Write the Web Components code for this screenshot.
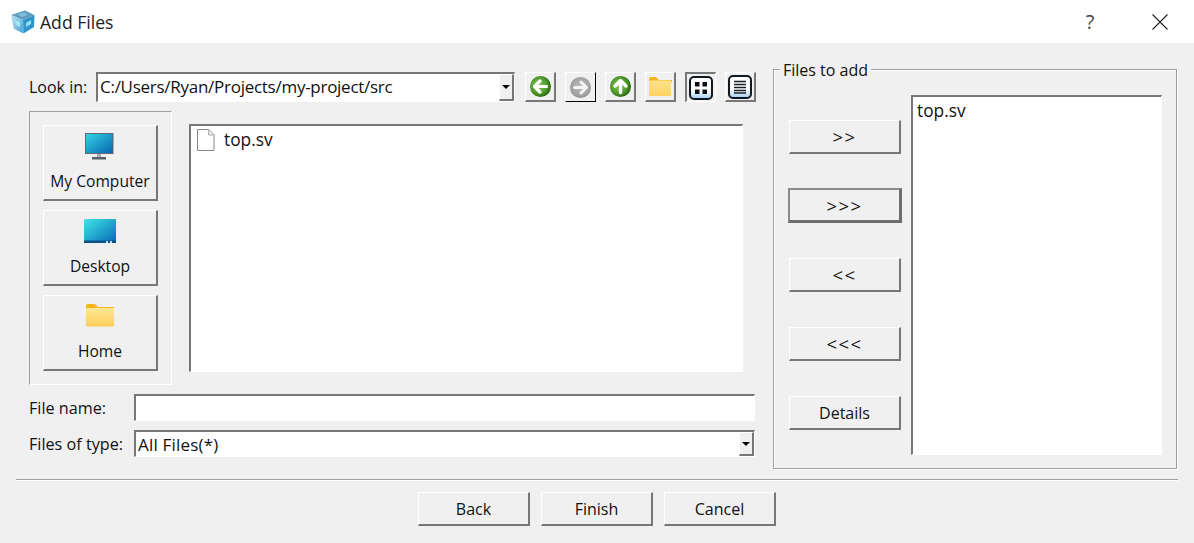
<!DOCTYPE html>
<html>
<head>
<meta charset="utf-8">
<title>Add Files</title>
<style>
    html, body { margin: 0; padding: 0; height: 100%; }
    body {
        background: #f0f0f0;
        color: #111;
        font: 16px "Open Sans", "Noto Sans", "Liberation Sans", sans-serif;
        overflow: hidden;
    }
</style>
</head>
<body>
<add-files-dialog></add-files-dialog>

<script>
// Iconos compartidos
const ICONOS = {
    back: `<svg width="27" height="27" viewBox="0 0 27 27"><defs><radialGradient id="v1" cx=".42" cy=".45" r=".6"><stop offset="0" stop-color="#8ccb5e"/><stop offset=".65" stop-color="#4f9a2c"/><stop offset="1" stop-color="#1f5f10"/></radialGradient></defs><circle cx="13.500" cy="13.500" r="10.500" fill="url(#v1)"/><path d="M13 8l-5.500 5.500L13 19M8 13.500h11.500" fill="none" stroke="#fff" stroke-width="3.200" stroke-linecap="round" stroke-linejoin="round"/></svg>`,
    forward: `<svg width="27" height="27" viewBox="0 0 27 27"><defs><radialGradient id="v3" cx=".5" cy=".45" r=".6"><stop offset="0" stop-color="#bdbdbd"/><stop offset=".7" stop-color="#a4a4a4"/><stop offset="1" stop-color="#858585"/></radialGradient></defs><circle cx="13.500" cy="13.500" r="10.500" fill="url(#v3)"/><path d="M14 8l5.500 5.500L14 19M19 13.500H7.500" fill="none" stroke="#f4f4f4" stroke-width="3" stroke-linecap="round" stroke-linejoin="round"/></svg>`,
    up: `<svg width="27" height="27" viewBox="0 0 27 27"><defs><radialGradient id="v2" cx=".42" cy=".45" r=".6"><stop offset="0" stop-color="#8ccb5e"/><stop offset=".65" stop-color="#4f9a2c"/><stop offset="1" stop-color="#1f5f10"/></radialGradient></defs><circle cx="13.500" cy="13.500" r="10.500" fill="url(#v2)"/><path d="M8 13l5.500-5.500L19 13M13.500 8v11.500" fill="none" stroke="#fff" stroke-width="3.400" stroke-linecap="round" stroke-linejoin="round"/></svg>`,
    folderSmall: `<svg width="23" height="19" viewBox="0 0 23 19"><defs><linearGradient id="c1" x1="0" y1="0" x2="0" y2="1"><stop offset="0" stop-color="#ffe28a"/><stop offset="1" stop-color="#fdd262"/></linearGradient></defs><path d="M0 1.500Q0 0 1.500 0H7l3 3h13v2H0z" fill="#f7b51f"/><rect y="3.500" width="22" height="15.500" rx="1" fill="url(#c1)"/></svg>`,
    grid: `<svg width="24" height="24" viewBox="0 0 24 24"><defs><linearGradient id="g1" x1="0" y1="0" x2="0" y2="1"><stop offset=".6" stop-color="#fff"/><stop offset="1" stop-color="#9fcdf3"/></linearGradient></defs><rect x="1" y="1" width="22" height="22" rx="4" fill="url(#g1)" stroke="#111820" stroke-width="2"/><path d="M6 6h4.500v4.500H6zM13.500 6H18v4.500h-4.500zM6 13.500h4.500V18H6zM13.500 13.500H18V18h-4.500z" fill="#0c1016"/></svg>`,
    list: `<svg width="24" height="24" viewBox="0 0 24 24"><defs><linearGradient id="g2" x1="0" y1="0" x2="0" y2="1"><stop offset=".6" stop-color="#fff"/><stop offset="1" stop-color="#9fcdf3"/></linearGradient></defs><rect x="1" y="1" width="22" height="22" rx="4" fill="url(#g2)" stroke="#111820" stroke-width="2"/><path d="M6 6.500h12M6 9.500h12M6 12.500h12M6 15.500h12M6 18h12" stroke="#1a1f26" stroke-width="1.600"/></svg>`,
    computer: `<svg width="30" height="27" viewBox="0 0 30 27"><defs><linearGradient id="m1" x1="0" y1="0" x2="1" y2="1"><stop offset="0" stop-color="#35d6e4"/><stop offset="1" stop-color="#0762b0"/></linearGradient></defs><rect x=".5" y=".5" width="27.500" height="20" fill="url(#m1)" stroke="#5c6873"/><rect x="12" y="21" width="4" height="3" fill="#a8aeb2"/><rect x="7" y="24" width="14" height="2.500" fill="#56606a"/></svg>`,
    desktop: `<svg width="33" height="26" viewBox="0 -1 33 26"><defs><linearGradient id="m2" x1="0" y1="0" x2="1" y2="1"><stop offset="0" stop-color="#3fe6e8"/><stop offset="1" stop-color="#0768b4"/></linearGradient></defs><rect width="32" height="24" rx="1" fill="url(#m2)"/><rect y="21.500" width="32" height="2.500" fill="#0a5288"/><rect x="22" y="22" width="2" height="2" fill="#b9dcee"/><rect x="26" y="22" width="2" height="2" fill="#b9dcee"/></svg>`,
    folder: `<svg width="29" height="24" viewBox="0 -1 29 24"><defs><linearGradient id="c2" x1="0" y1="0" x2="0" y2="1"><stop offset="0" stop-color="#ffe795"/><stop offset="1" stop-color="#fdcf5b"/></linearGradient></defs><path d="M0 1.500Q0 0 1.500 0H9l3 3h16v3H0z" fill="#f7b51f"/><rect y="4" width="28" height="18.500" rx="1" fill="url(#c2)"/></svg>`,
    doc: `<svg width="18" height="22" viewBox="0 0 18 22"><path d="M.5.500H12L17 5.500V21.500H.5z" fill="#fff" stroke="#8a8a8a"/><path d="M11.500.500V6H17" fill="#e6e6e6" stroke="#b0b0b0"/></svg>`,
    cube: `<svg width="26" height="26" viewBox="0 0 26 26"><defs><linearGradient id="q1" x1="0" y1="0" x2="1" y2="1"><stop offset="0" stop-color="#b5e2f2"/><stop offset="1" stop-color="#4aa3d6"/></linearGradient><filter id="bl"><feGaussianBlur stdDeviation=".55"/></filter></defs><g filter="url(#bl)"><path d="M1 6L15 1.500 24.500 6 13 11z" fill="#5f9cbd"/><path d="M1 6l12 5 .5 13.500L4 20z" fill="url(#q1)"/><path d="M13 11l11.500-5-.5 12-10.500 6.500z" fill="#2f94cc"/><path d="M5 11l5 2v5l-4-2zM16 14l5-3v4l-5 3z" fill="#a8ecf6" opacity=".85"/><path d="M7 5.500l7-2 4 2-6 2.500z" fill="#7fc0dc"/></g></svg>`
};

const BISEL = `
    background: #f0f0f0;
    box-sizing: border-box;
    border-style: solid;
    border-width: 1px 2px 2px 1px;
    border-color: #fff #777 #777 #fff;
`;

// Barra de titulo
class BarraTitulo extends HTMLElement {
    constructor() {
        super();
        this.attachShadow({ mode: 'open' });
        this.shadowRoot.innerHTML = `
            <style>
                :host {
                    display: flex;
                    align-items: center;
                    height: 43px;
                    background: #fff;
                    padding-left: 10px;
                    color: #222;
                }
                .logo { display: flex; margin-right: 4px; }
                .texto { flex: 1; font-size: 17.6px; }
                .ayuda { width: 22px; text-align: center; font-size: 20px; color: #444; margin-right: 51px; }
                .cerrar { display: flex; margin-right: 26px; }
            </style>
            <span class="logo">${ICONOS.cube}</span>
            <span class="texto"><slot></slot></span>
            <span class="ayuda">?</span>
            <span class="cerrar"><svg width="16" height="16" viewBox="0 0 16 16"><path d="M.5.500l15 15M15.500.500l-15 15" stroke="#222" stroke-width="1.100" fill="none"/></svg></span>
        `;
    }
}

// Combo con flecha
class CajaCombo extends HTMLElement {
    constructor() {
        super();
        this.attachShadow({ mode: 'open' });
        this.shadowRoot.innerHTML = `
            <style>
                :host {
                    display: flex;
                    box-sizing: border-box;
                    background: #fff;
                    border-style: solid;
                    border-width: 2px 1px 1px 2px;
                    border-color: #777 #fff #fff #777;
                    align-items: stretch;
                    font-size: 17px;
                }
                .valor { flex: 1; padding-left: 2px; line-height: 26px; white-space: nowrap; color: #111; }
                .flecha {
                    ${BISEL}
                    width: 15px;
                    display: flex;
                    align-items: center;
                    justify-content: center;
                }
                .flecha i {
                    border: 4px solid transparent;
                    border-top: 4px solid #000;
                    border-bottom: 0;
                    display: block;
                }
            </style>
            <span class="valor"><slot></slot></span>
            <span class="flecha"><i></i></span>
        `;
    }
}

// Boton de la barra de herramientas
class BotonHerramienta extends HTMLElement {
    constructor() {
        super();
        this.attachShadow({ mode: 'open' });
    }

    connectedCallback() {
        const icono = ICONOS[this.getAttribute('icono')] || '';
        const estado = this.getAttribute('estado');
        let bordes = 'border-color: #fff #777 #777 #fff;';
        if (estado === 'plano') bordes = 'border-width: 1px 1px 1px 1px; border-color: #fff #000 #000 #fff;';
        if (estado === 'activo') bordes = 'border-width: 2px 1px 1px 2px; border-color: #777 #fff #fff #777;';
        this.shadowRoot.innerHTML = `
            <style>
                :host {
                    ${BISEL}
                    ${bordes}
                    display: flex;
                    align-items: center;
                    justify-content: center;
                    width: 31px;
                    height: 30px;
                }
                svg { display: block; }
            </style>
            ${icono}
        `;
    }
}

// Boton normal de texto, opcionalmente con icono encima
class BotonNormal extends HTMLElement {
    constructor() {
        super();
        this.attachShadow({ mode: 'open' });
    }

    connectedCallback() {
        const icono = ICONOS[this.getAttribute('icono')];
        this.shadowRoot.innerHTML = `
            <style>
                :host {
                    ${BISEL}
                    display: flex;
                    flex-direction: column;
                    align-items: center;
                    justify-content: center;
                    width: 112px;
                    height: 34px;
                    color: #111;
                    white-space: nowrap;
                }
                :host([icono]) {
                    width: 115px;
                    height: 76px;
                    justify-content: flex-start;
                    font-size: 15.6px;
                }
                :host([por-defecto]) {
                    width: 114px;
                    height: 35px;
                    margin-top: -1px;
                    border-width: 2px 3px 3px 2px;
                    border-color: #6e6e6e;
                    border-top-color: #8a8a8a;
                    border-left-color: #8a8a8a;
                }
                :host([flechas]) { letter-spacing: 1.5px; font-size: 18.5px; }
                .icono { height: 35px; margin-top: 7px; margin-bottom: 2px; display: flex; align-items: flex-start; }
                svg { display: block; }
            </style>
            ${icono ? `<span class="icono">${icono}</span>` : ''}
            <slot></slot>
        `;
    }
}

// Lista blanca hundida
class ListaArchivos extends HTMLElement {
    constructor() {
        super();
        this.attachShadow({ mode: 'open' });
        this.shadowRoot.innerHTML = `
            <style>
                :host {
                    display: block;
                    box-sizing: border-box;
                    background: #fff;
                    border-style: solid;
                    border-width: 2px 1px 1px 2px;
                    border-color: #777 #fff #fff #777;
                    color: #111;
                    font-size: 17.300px;
                }
            </style>
            <slot></slot>
        `;
    }
}

// Fila con icono para el listado
class FilaArchivo extends HTMLElement {
    constructor() {
        super();
        this.attachShadow({ mode: 'open' });
        this.shadowRoot.innerHTML = `
            <style>
                :host { display: flex; align-items: center; gap: 9px; padding: 0 0 0 6px; height: 27px; }
                svg { display: block; }
            </style>
            ${ICONOS.doc}
            <slot></slot>
        `;
    }
}

// Panel izquierdo de accesos
class PanelLugares extends HTMLElement {
    constructor() {
        super();
        this.attachShadow({ mode: 'open' });
        this.shadowRoot.innerHTML = `
            <style>
                :host {
                    display: flex;
                    flex-direction: column;
                    gap: 9px;
                    box-sizing: border-box;
                    width: 143px;
                    height: 274px;
                    padding: 13px 0 0 13px;
                    border-top: 1px solid #a0a0a0;
                    border-left: 1px solid #a0a0a0;
                    border-right: 1px solid #fff;
                    border-bottom: 1px solid #fff;
                }
            </style>
            <slot></slot>
        `;
    }
}

// Grupo "Files to add"
class GrupoAgregar extends HTMLElement {
    constructor() {
        super();
        this.attachShadow({ mode: 'open' });
        this.shadowRoot.innerHTML = `
            <style>
                :host {
                    display: grid;
                    grid-template-columns: 114px 251px;
                    column-gap: 9px;
                    box-sizing: border-box;
                    width: 404px;
                    height: 400px;
                    padding: 25px 0 0 14px;
                    border: 1px solid #a0a0a0;
                    box-shadow: inset 1px 1px 0 #fff, 1px 1px 0 #fff;
                    position: relative;
                }
                .titulo {
                    position: absolute;
                    left: 6px;
                    top: -11px;
                    padding: 0 3px;
                    background: #f0f0f0;
                    color: #111;
                    line-height: 22px;
                }
                .botones {
                    display: flex;
                    flex-direction: column;
                    align-items: center;
                    padding-top: 25px;
                    gap: 35px;
                }
                .lista { height: 360px; }
            </style>
            <span class="titulo">Files to add</span>
            <div class="botones"><slot name="botones"></slot></div>
            <div class="lista"><slot name="lista"></slot></div>
        `;
    }
}

// Dialogo completo
class DialogoAgregar extends HTMLElement {
    constructor() {
        super();
        this.attachShadow({ mode: 'open' });
    }

    connectedCallback() {
        this.shadowRoot.innerHTML = `
            <style>
                :host { display: block; width: 1194px; height: 543px; }
                .cuerpo {
                    display: flex;
                    gap: 17px;
                    padding: 26px 16px 0 29px;
                    height: 400px;
                }
                .izquierda {
                    width: 727px;
                    padding-top: 3px;
                    display: flex;
                    flex-direction: column;
                }
                .fila-mirar { display: flex; align-items: center; height: 30px; margin-bottom: 9px; }
                .etiqueta { width: 67px; white-space: nowrap; color: #111; }
                .herramientas { display: flex; gap: 9px; margin-left: 10px; }
                caja-combo.mirar { width: 419px; height: 30px; letter-spacing: -.27px; }
                .centro { display: flex; gap: 17px; }
                lista-archivos.archivos { width: 554px; height: 248px; margin-top: 13px; }
                .fila-campo { display: flex; align-items: center; height: 27px; }
                .fila-campo .etiqueta { width: 105px; font-size: 16.200px; }
                .campo { width: 621px; height: 27px; }
                caja-combo.campo { letter-spacing: .2px; }
                .nombre { margin-top: 9px; margin-bottom: 9px; }
                .separador {
                    margin: 10px 16px 0;
                    height: 1px;
                    background: #a0a0a0;
                    border-bottom: 1px solid #fff;
                }
                .pie {
                    display: flex;
                    justify-content: center;
                    gap: 11px;
                    padding: 11px 0 0 12px;
                    width: 1170px;
                }
                .top { line-height: 28px; padding-left: 4px; }
            </style>
            <barra-titulo>Add Files</barra-titulo>
            <div class="cuerpo">
                <div class="izquierda">
                    <div class="fila-mirar">
                        <span class="etiqueta">Look in:</span>
                        <caja-combo class="mirar">C:/Users/Ryan/Projects/my-project/src</caja-combo>
                        <div class="herramientas">
                            <boton-herramienta icono="back"></boton-herramienta>
                            <boton-herramienta icono="forward" estado="plano"></boton-herramienta>
                            <boton-herramienta icono="up"></boton-herramienta>
                            <boton-herramienta icono="folderSmall"></boton-herramienta>
                            <boton-herramienta icono="grid" estado="activo"></boton-herramienta>
                            <boton-herramienta icono="list"></boton-herramienta>
                        </div>
                    </div>
                    <div class="centro">
                        <panel-lugares>
                            <boton-normal icono="computer">My Computer</boton-normal>
                            <boton-normal icono="desktop">Desktop</boton-normal>
                            <boton-normal icono="folder">Home</boton-normal>
                        </panel-lugares>
                        <lista-archivos class="archivos">
                            <fila-archivo>top.sv</fila-archivo>
                        </lista-archivos>
                    </div>
                    <div class="fila-campo nombre">
                        <span class="etiqueta">File name:</span>
                        <lista-archivos class="campo"></lista-archivos>
                    </div>
                    <div class="fila-campo">
                        <span class="etiqueta">Files of type:</span>
                        <caja-combo class="campo">All Files(*)</caja-combo>
                    </div>
                </div>
                <grupo-agregar>
                    <boton-normal slot="botones" flechas>&gt;&gt;</boton-normal>
                    <boton-normal slot="botones" flechas por-defecto>&gt;&gt;&gt;</boton-normal>
                    <boton-normal slot="botones" flechas>&lt;&lt;</boton-normal>
                    <boton-normal slot="botones" flechas>&lt;&lt;&lt;</boton-normal>
                    <boton-normal slot="botones">Details</boton-normal>
                    <lista-archivos slot="lista" style="height:360px"><div class="top">top.sv</div></lista-archivos>
                </grupo-agregar>
            </div>
            <div class="separador"></div>
            <div class="pie">
                <boton-normal>Back</boton-normal>
                <boton-normal>Finish</boton-normal>
                <boton-normal>Cancel</boton-normal>
            </div>
        `;
    }
}

customElements.define('barra-titulo', BarraTitulo);
customElements.define('caja-combo', CajaCombo);
customElements.define('boton-herramienta', BotonHerramienta);
customElements.define('boton-normal', BotonNormal);
customElements.define('lista-archivos', ListaArchivos);
customElements.define('fila-archivo', FilaArchivo);
customElements.define('panel-lugares', PanelLugares);
customElements.define('grupo-agregar', GrupoAgregar);
customElements.define('add-files-dialog', DialogoAgregar);
</script>
</body>
</html>
